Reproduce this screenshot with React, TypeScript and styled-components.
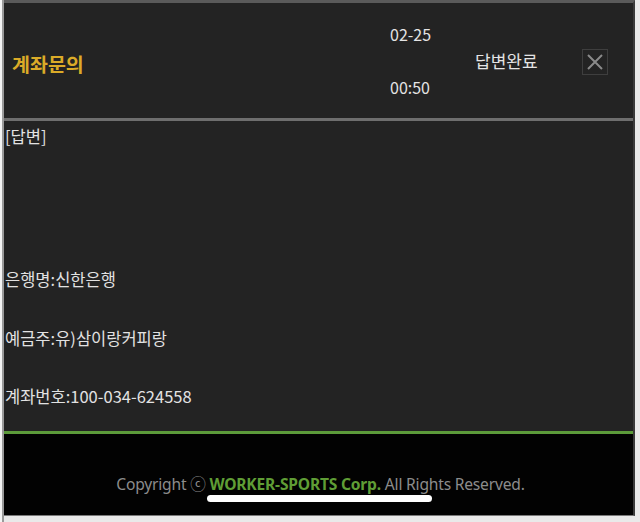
import styled, { createGlobalStyle } from 'styled-components';

const GlobalStyle = createGlobalStyle`
    html, body {
        margin: 0;
        padding: 0;
        background: #e9e9e9;
    }
    body {
        font-family: "Noto Sans CJK KR", "Noto Sans", sans-serif;
    }
`

const App = () => {
    return (
        <>
            <GlobalStyle />
            <Frame>
                <Screen>
                    <Header>
                        <Title>계좌문의</Title>
                        <DateBox>
                            <span>02-25</span>
                            <span>00:50</span>
                        </DateBox>
                        <Status>답변완료</Status>
                        <CloseButton aria-label="close">
                            <svg width="18" height="18" viewBox="0 0 18 18">
                                <path d="M2 2 L16 16 M16 2 L2 16" stroke="#8a8a8a" strokeWidth="2" />
                            </svg>
                        </CloseButton>
                    </Header>
                    <Body>
                        <Line>[답변]</Line>
                        <Line $gap={121}>은행명:신한은행</Line>
                        <Line $gap={37}>예금주:유)삼이랑커피랑</Line>
                        <Line $gap={36}>계좌번호:100-034-624558</Line>
                    </Body>
                    <Footer>
                        <Copy>
                            Copyright ⓒ <Brand>WORKER-SPORTS Corp.</Brand> All Rights Reserved.
                        </Copy>
                        <HomeBar />
                    </Footer>
                </Screen>
            </Frame>
        </>
    )
}

const Frame = styled.div`
    width: 640px;
    height: 522px;
    box-sizing: border-box;
    padding: 0 5px 6px 4px;
    background: linear-gradient(to right, #f4f4f4 0 2px, #9a9a9a 2px 4px, #e9e9e9 4px);
`

const Screen = styled.div`
    height: 100%;
    display: flex;
    flex-direction: column;
    background: #232323;
    border-top: 3px solid #5a5a5a;
    border-right: 2px solid #3a3a3a;
    border-bottom: 1px solid #7a7a7a;
    box-sizing: border-box;
    position: relative;
`

const Header = styled.div`
    height: 118px;
    flex-shrink: 0;
    display: flex;
    align-items: center;
    border-bottom: 3px solid #6e6e6e;
    box-sizing: border-box;
    padding: 0 0 0 8px;
`

const Title = styled.div`
    flex: 1;
    color: #dbab28;
    font-size: 19.5px;
    font-weight: 700;
    padding-top: 5px;
`

const DateBox = styled.div`
    display: flex;
    flex-direction: column;
    justify-content: space-between;
    height: 73px;
    color: #e4e4e4;
    font-size: 16px;
    line-height: 20px;
    width: 85px;
`

const Status = styled.div`
    color: #e4e4e4;
    font-size: 17px;
    width: 107px;
`

const CloseButton = styled.div`
    width: 24px;
    height: 24px;
    border: 1px solid #3e3e3e;
    display: flex;
    align-items: center;
    justify-content: center;
    margin-right: 25px;
    margin-top: 2px;
`

const Body = styled.div`
    flex: 1;
    display: flex;
    flex-direction: column;
    padding: 4px 0 0 1px;
    border-bottom: 3px solid #5c9b3a;
`

const Line = styled.div<{ $gap?: number }>`
    color: #e2e2e2;
    font-size: 16.5px;
    line-height: 22px;
    margin-top: ${p => p.$gap ?? 0}px;
`

const Footer = styled.div`
    height: 81px;
    flex-shrink: 0;
    background: #020202;
    display: flex;
    flex-direction: column;
    align-items: center;
    padding-top: 38px;
    box-sizing: border-box;
    position: relative;
`

const Copy = styled.div`
    color: #8c8c8c;
    font-family: "Noto Sans", "Noto Sans CJK KR", sans-serif;
    font-size: 15.6px;
    letter-spacing: -0.2px;
    padding-left: 4px;
`

const Brand = styled.span`
    color: #5f9d35;
    font-weight: 700;
`

const HomeBar = styled.div`
    position: absolute;
    left: 203px;
    top: 61px;
    width: 225px;
    height: 7px;
    border-radius: 4px;
    background: #ffffff;
`

export default App;
